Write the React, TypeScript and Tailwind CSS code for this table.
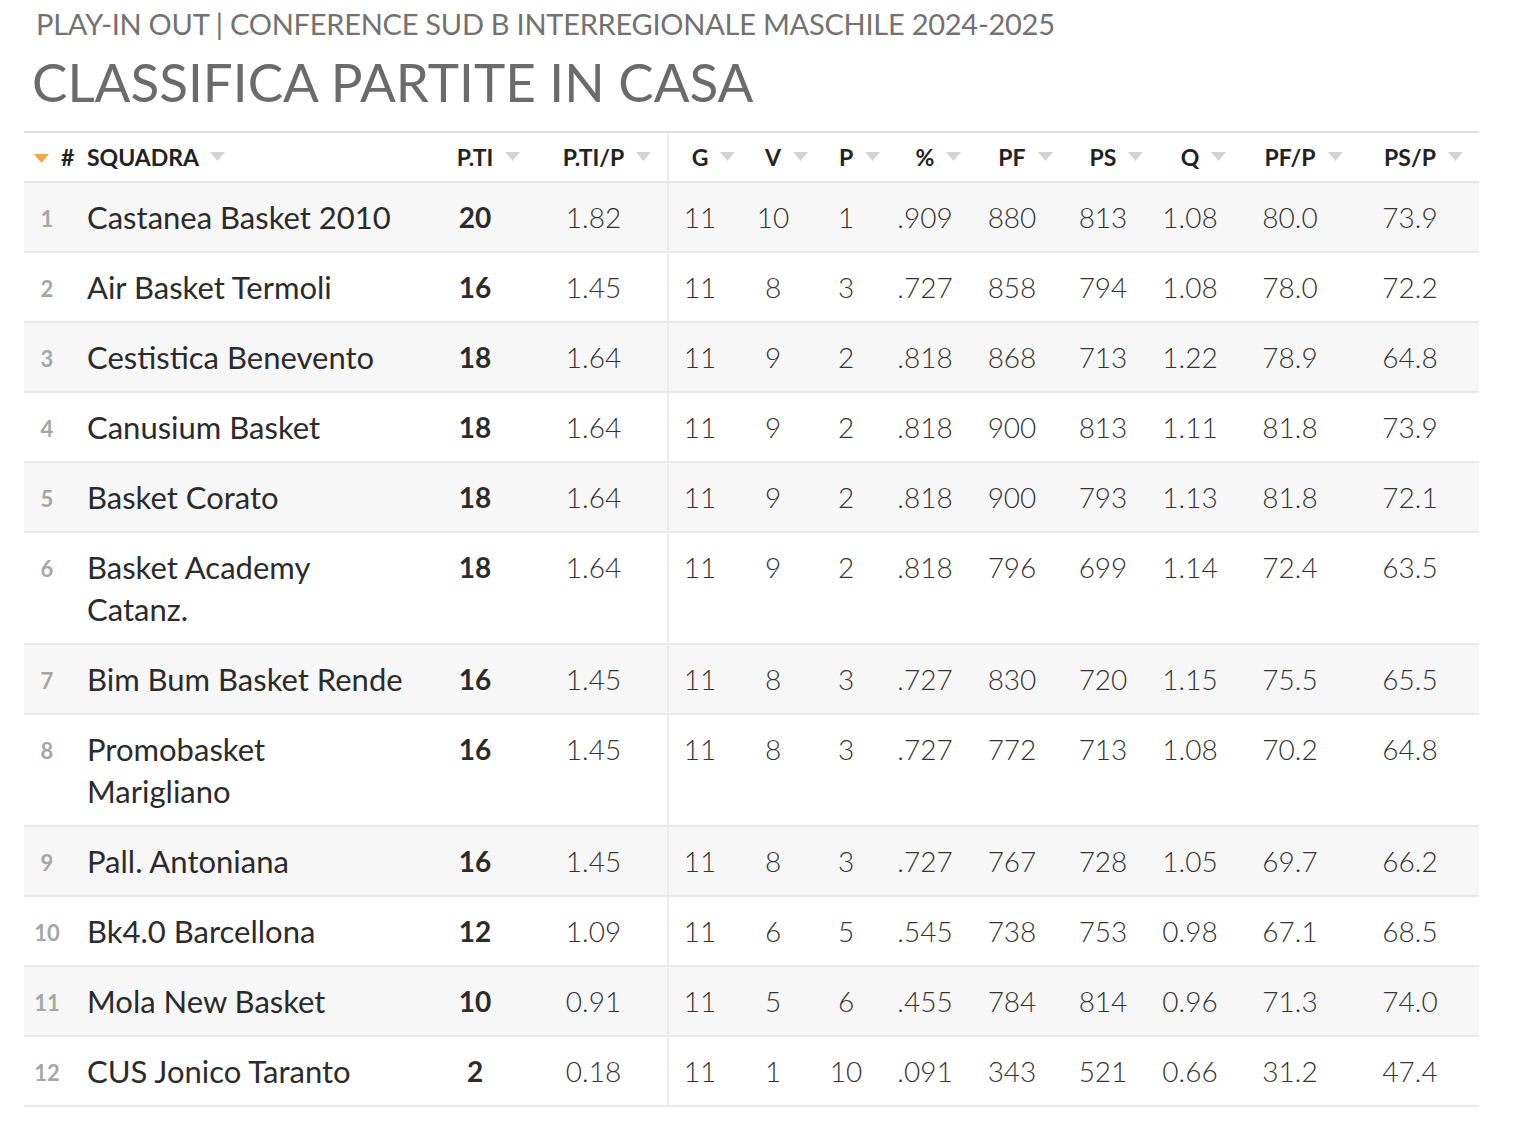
import React from 'react';

type Row = [number, string, number, string, number, number, number, string, number, number, string, string, string];

const rows: Row[] = [
  [1, 'Castanea Basket 2010', 20, '1.82', 11, 10, 1, '.909', 880, 813, '1.08', '80.0', '73.9'],
  [2, 'Air Basket Termoli', 16, '1.45', 11, 8, 3, '.727', 858, 794, '1.08', '78.0', '72.2'],
  [3, 'Cestistica Benevento', 18, '1.64', 11, 9, 2, '.818', 868, 713, '1.22', '78.9', '64.8'],
  [4, 'Canusium Basket', 18, '1.64', 11, 9, 2, '.818', 900, 813, '1.11', '81.8', '73.9'],
  [5, 'Basket Corato', 18, '1.64', 11, 9, 2, '.818', 900, 793, '1.13', '81.8', '72.1'],
  [6, 'Basket Academy Catanz.', 18, '1.64', 11, 9, 2, '.818', 796, 699, '1.14', '72.4', '63.5'],
  [7, 'Bim Bum Basket Rende', 16, '1.45', 11, 8, 3, '.727', 830, 720, '1.15', '75.5', '65.5'],
  [8, 'Promobasket Marigliano', 16, '1.45', 11, 8, 3, '.727', 772, 713, '1.08', '70.2', '64.8'],
  [9, 'Pall. Antoniana', 16, '1.45', 11, 8, 3, '.727', 767, 728, '1.05', '69.7', '66.2'],
  [10, 'Bk4.0 Barcellona', 12, '1.09', 11, 6, 5, '.545', 738, 753, '0.98', '67.1', '68.5'],
  [11, 'Mola New Basket', 10, '0.91', 11, 5, 6, '.455', 784, 814, '0.96', '71.3', '74.0'],
  [12, 'CUS Jonico Taranto', 2, '0.18', 11, 1, 10, '.091', 343, 521, '0.66', '31.2', '47.4'],
];

const statHeaders = ['G', 'V', 'P', '%', 'PF', 'PS', 'Q', 'PF/P', 'PS/P'];

const grid =
  'grid grid-cols-[44px_362px_90px_147px_64px_84px_62px_96px_78px_104px_70px_130px_110px] pr-[14px]';

function SortArrow({ orange = false }: { orange?: boolean }) {
  return (
    <svg width="15" height="9" viewBox="0 0 15 9" className="block shrink-0">
      <polygon points="0,0 15,0 7.5,9" fill={orange ? '#f4a541' : '#d4d4d4'} />
    </svg>
  );
}

function HeadCell({ label, divider = false }: { label: string; divider?: boolean }) {
  return (
    <div className={`flex items-center justify-center ${divider ? 'border-l-2 border-[#ececec]' : ''}`}>
      <span className="relative">
        {label}
        <span className="absolute left-full top-[12px] ml-[12px]">
          <SortArrow />
        </span>
      </span>
    </div>
  );
}

export default function App() {
  return (
    <div className="min-h-[1138px] bg-white pt-[6px] font-['Lato','Liberation_Sans',sans-serif]">
      <div className="whitespace-nowrap pl-[36px] text-[29px] leading-[36px] tracking-[-0.25px] text-[#727272]">
        PLAY-IN OUT | CONFERENCE SUD B INTERREGIONALE MASCHILE 2024-2025
      </div>
      <h1 className="pl-[32px] text-[53px] leading-[80px] text-[#6b6b6b]">
        CLASSIFICA PARTITE IN CASA
      </h1>

      <div className="ml-[24px] mt-[9px] w-[1455px] border-t-2 border-[#dedede]">
        <div className={`${grid} h-[50px] border-b-2 border-[#e6e6e6] text-[23px] font-bold text-[#222]`}>
          <div className="flex items-center whitespace-nowrap pl-[10px]">
            <span className="mt-[3px]">
              <SortArrow orange />
            </span>
            <span className="ml-[12px]">#</span>
          </div>
          <div className="flex items-center pl-[19px]">
            <span className="relative">
              SQUADRA
              <span className="absolute left-full top-[12px] ml-[11px]">
                <SortArrow />
              </span>
            </span>
          </div>
          <HeadCell label="P.TI" />
          <HeadCell label="P.TI/P" />
          {statHeaders.map((h, i) => (
            <HeadCell key={h} label={h} divider={i === 0} />
          ))}
        </div>

        {rows.map((r, idx) => (
          <div
            key={r[0]}
            className={`${grid} border-b-2 border-[#e9e9e9] leading-[42px] ${idx % 2 === 0 ? 'bg-[#f7f7f7]' : 'bg-white'}`}
          >
            <div className="pb-[11px] pl-[2px] pt-[15px] text-center text-[22px] font-bold text-[#a6a6a6]">{r[0]}</div>
            <div className="py-[13px] pl-[19px] pr-[24px] text-[31px] text-[#2b2b2b]">{r[1]}</div>
            <div className="py-[13px] text-center text-[28px] font-bold text-[#2b2b2b]">{r[2]}</div>
            <div className="py-[13px] text-center text-[28px] font-light text-[#333]">{r[3]}</div>
            {r.slice(4).map((v, i) => (
              <div
                key={i}
                className={`py-[13px] text-center text-[28px] font-light text-[#333] ${i === 0 ? 'border-l-2 border-[#ececec]' : ''}`}
              >
                {v}
              </div>
            ))}
          </div>
        ))}
      </div>
    </div>
  );
}
